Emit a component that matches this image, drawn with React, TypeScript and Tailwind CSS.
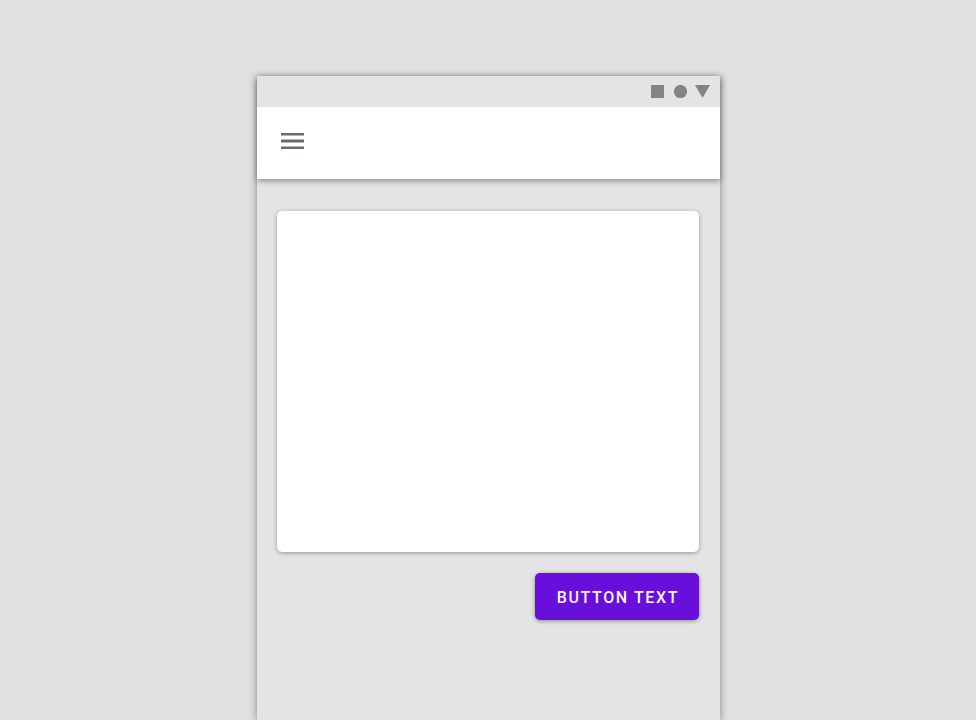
import React from "react";

function StatusBar() {
  return (
    <div className="flex h-[31px] items-center justify-end bg-[#e4e4e6] pr-[10px]">
      <svg width="59" height="13" viewBox="0 0 59 13" fill="#818585" aria-hidden="true">
        <rect width="13" height="13" />
        <circle cx="29.5" cy="6.5" r="6.6" />
        <path d="M44 0h15l-7.5 13z" />
      </svg>
    </div>
  );
}

function AppBar() {
  return (
    <header className="flex h-[72px] items-center bg-white px-6 pb-1">
      <button type="button" aria-label="Open menu" className="block">
        <svg width="23" height="16" viewBox="0 0 23 16" aria-hidden="true">
          <path fill="#b5b2b5" d="M0 2h23v1H0zM0 6h23v1H0zM0 9h23v1H0zM0 13h23v1H0z" />
          <path fill="#6f6870" d="M0 0h23v2H0zM0 7h23v2H0zM0 14h23v2H0z" />
        </svg>
      </button>
    </header>
  );
}

export default function App() {
  return (
    <div className="flex min-h-screen justify-center bg-[#e0e0e0] pt-[76px] pl-px font-['Roboto',sans-serif]">
      <div className="flex w-full max-w-[463px] flex-col bg-[#e4e4e6] shadow-[0_1px_8px_rgba(0,0,0,0.4)]">
        <div className="relative shadow-[0_2px_6px_rgba(0,0,0,0.4)]">
          <StatusBar />
          <AppBar />
        </div>
        <main className="flex flex-col items-end pt-8 pr-[21px] pb-8 pl-5">
          <section className="h-[341px] w-full rounded-[5px] bg-white shadow-[0_1px_4px_rgba(0,0,0,0.35)]" />
          <button
            type="button"
            className="mt-[21px] h-[47px] min-w-[164px] rounded-[5px] bg-[#680fdb] pt-0.5 pr-5 pl-[22px] text-base font-medium tracking-widest text-[#fbf3ff] uppercase shadow-[0_1px_4px_rgba(0,0,0,0.4)]"
          >
            Button text
          </button>
        </main>
      </div>
    </div>
  );
}
